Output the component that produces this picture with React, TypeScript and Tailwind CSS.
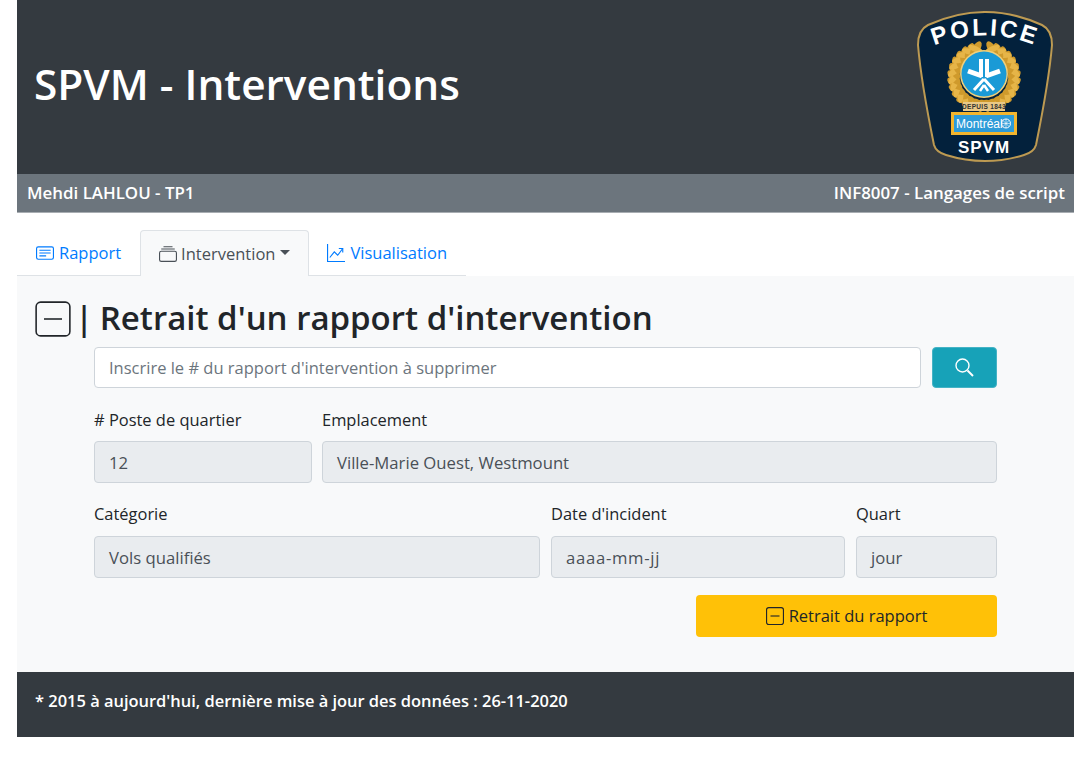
const font = { fontFamily: '"Open Sans", "Noto Sans", sans-serif' };

function CardTextIcon() {
  return (
    <svg width="18" height="18" viewBox="0 0 16 16" fill="none" stroke="currentColor" strokeWidth="1">
      <rect x="0.5" y="2.5" width="15" height="11" rx="1.5" />
      <path d="M3 5.5h10M3 8h10M3 10.5h6" />
    </svg>
  );
}

function CollectionIcon() {
  return (
    <svg width="18" height="18" viewBox="0 0 16 16" fill="none" stroke="currentColor" strokeWidth="1">
      <rect x="0.5" y="5.5" width="15" height="9" rx="1.5" />
      <path d="M2 3.5h12M4 1.5h8" />
    </svg>
  );
}

function GraphIcon() {
  return (
    <svg width="18" height="18" viewBox="0 0 16 16" fill="none" stroke="currentColor" strokeWidth="1">
      <path d="M0.5 0v15.5H16" />
      <path d="M2.5 12l4-5 3 3 4.5-6" />
      <path d="M10.5 4h3.5v3.5" />
    </svg>
  );
}

function DashSquareIcon({ size, width = 1 }: { size: number; width?: number }) {
  return (
    <svg width={size} height={size} viewBox="0 0 16 16" fill="none" stroke="currentColor" strokeWidth={width}>
      <rect x="0.5" y="0.5" width="15" height="15" rx="2" />
      <path d="M4 8h8" />
    </svg>
  );
}

function SearchIcon() {
  return (
    <svg width="19" height="19" viewBox="0 0 19 19" fill="none" stroke="currentColor">
      <circle cx="7.5" cy="7.5" r="6.5" strokeWidth="1.4" />
      <path d="M12.5 12.5l5.5 5.5" strokeWidth="2" />
    </svg>
  );
}

// laurel leaves around the emblem, from the bottom up each side
const leaves = Array.from({ length: 13 }, (_, i) => 14 + i * 12.5);

function PoliceBadge() {
  return (
    <svg width="138" height="152" viewBox="0 0 138 152">
      <path
        d="M12 14 Q69 -12 126 14 Q136 19 136 34 Q133 70 120 134 Q118 141 108 144 Q69 156 30 144 Q20 141 18 134 Q5 70 2 34 Q2 19 12 14 Z"
        fill="#03213c"
        stroke="#bd9a52"
        strokeWidth="2"
      />
      <path id="policeArc" d="M6 40 Q69 9 132 40" fill="none" />
      <text fontFamily="Liberation Sans, sans-serif" fontWeight="700" fontSize="24" letterSpacing="2.5" fill="#ffffff">
        <textPath href="#policeArc" startOffset="50%" textAnchor="middle">POLICE</textPath>
      </text>
      {leaves.map((a) =>
        [-1, 1].map((side) => {
          const rad = (a * Math.PI) / 180;
          const x = 68 + side * 30 * Math.sin(rad);
          const y = 66 + 29 * Math.cos(rad);
          return (
            <g key={`${a}${side}`}>
              <ellipse cx={x} cy={y} rx="9" ry="4" fill="#cf9a2c" transform={`rotate(${-side * a + 40 * side} ${x} ${y})`} />
              <ellipse cx={x} cy={y} rx="8" ry="3" fill="#e6b548" transform={`rotate(${-side * a - 40 * side} ${x} ${y})`} />
            </g>
          );
        })
      )}
      <circle cx="68" cy="63" r="24" fill="#f0cf7a" />
      <circle cx="68" cy="63" r="22.5" fill="#1a9ad6" />
      <g stroke="#ffffff" fill="none" strokeLinecap="butt">
        <path d="M65 48v18M71 48v18" strokeWidth="4" />
        <path d="M52 60l14 5M84 60l-14 5" strokeWidth="5" />
        <path d="M68 68l-10 11M68 68l10 11" strokeWidth="3" />
        <path d="M68 74l-4 6M68 74l4 6" strokeWidth="2.5" />
      </g>
      <rect x="47" y="91" width="42" height="9" fill="#e9c987" />
      <text x="68" y="98" textAnchor="middle" fontFamily="Liberation Sans, sans-serif" fontWeight="700" fontSize="6.5" letterSpacing="0.3" fill="#333333">DEPUIS 1843</text>
      <rect x="36.5" y="102.5" width="63" height="20" fill="#2d9bd8" stroke="#f3b52e" strokeWidth="3" />
      <text x="40" y="117" fontFamily="Liberation Sans, sans-serif" fontSize="12" fill="#ffffff">Montréal</text>
      <circle cx="90" cy="112.5" r="4.5" fill="none" stroke="#ffffff" strokeWidth="1" />
      <path d="M90 108v9M86 112.5h8M87 109.5l6 6M93 109.5l-6 6" stroke="#ffffff" strokeWidth="0.6" />
      <text x="68" y="142" textAnchor="middle" fontFamily="Liberation Sans, sans-serif" fontWeight="700" fontSize="17" letterSpacing="1" fill="#ffffff">SPVM</text>
    </svg>
  );
}

function Field({
  label,
  value,
  className,
  inputGap,
  valueClass = '',
}: {
  label: string;
  value: string;
  className: string;
  inputGap: string;
  valueClass?: string;
}) {
  return (
    <div className={className}>
      <div className="h-[24px] text-[16.45px] leading-[24px] text-[#212529]">{label}</div>
      <div
        className={`${inputGap} flex h-[42px] items-center rounded-[4px] border border-[#ced4da] bg-[#e9ecef] px-[14px] pt-[2px] text-[16.7px] text-[#495057] ${valueClass}`}
      >
        {value}
      </div>
    </div>
  );
}

export default function App() {
  return (
    <div className="min-h-[770px] bg-white pl-[17px]" style={font}>
      <div className="w-[1057px]">
        <header className="flex h-[174px] items-center justify-between bg-[#343a40] pl-[17px] pr-[20px] text-white">
          <h1 className="pb-[6px] text-[42.4px] font-semibold">SPVM - Interventions</h1>
          <PoliceBadge />
        </header>
        <div className="flex h-[39px] items-center justify-between border-b border-[#a8adb2] bg-[#6c757d] pl-[10px] pr-[9px] text-[16.9px] font-semibold text-white">
          <span>Mehdi LAHLOU - TP1</span>
          <span>INF8007 - Langages de script</span>
        </div>

        <nav className="mt-[17px] flex h-[46px] items-end text-[16.5px] leading-[24px]">
          <a className="flex h-[45px] items-center gap-[5px] border-b border-[#dee2e6] pl-[19px] pr-[19px] text-[#007bff]">
            <CardTextIcon />
            Rapport
          </a>
          <a className="flex h-[46px] items-center gap-[4px] rounded-t-[4px] border border-b-0 border-[#dee2e6] bg-[#f8f9fa] pl-[18px] pr-[18px] text-[#495057]">
            <CollectionIcon />
            Intervention
            <span className="mb-[3px] ml-[1px] h-0 w-0 border-x-[5.5px] border-t-[5.5px] border-x-transparent border-t-[#495057]" />
          </a>
          <a className="flex h-[45px] items-center gap-[5px] border-b border-[#dee2e6] pl-[18px] pr-[19px] text-[#007bff]">
            <GraphIcon />
            Visualisation
          </a>
        </nav>

        <main className="h-[396px] bg-[#f8f9fa] px-[18px] pt-[24px]">
          <div className="flex h-[38px] items-center gap-[4px] text-[#212529]">
            <DashSquareIcon size={36} width={0.7} />
            <h2 className="pb-[2px] text-[33px] font-semibold leading-[38px]">
              <span className="mr-[-2px]">|</span> Retrait d'un rapport d'intervention
            </h2>
          </div>
          <div className="ml-[59px] mt-[9px] w-[903px]">
            <div className="flex gap-[11px]">
              <div className="flex h-[41px] flex-1 items-center rounded-[4px] border border-[#ced4da] bg-white px-[14px] pt-[2px] text-[16.5px] text-[#6c757d]">
                Inscrire le # du rapport d'intervention à supprimer
              </div>
              <button className="flex h-[41px] w-[65px] items-center justify-center rounded-[4px] border border-[#45b3c5] bg-[#17a2b8] text-white">
                <SearchIcon />
              </button>
            </div>
            <div className="mt-[20px] flex gap-[10px]">
              <Field label="# Poste de quartier" value="12" className="w-[218px]" inputGap="mt-[9px]" />
              <Field label="Emplacement" value="Ville-Marie Ouest, Westmount" className="flex-1" inputGap="mt-[9px]" />
            </div>
            <div className="mt-[19px] flex gap-[11px]">
              <Field label="Catégorie" value="Vols qualifiés" className="w-[446px]" inputGap="mt-[10px]" />
              <Field label="Date d'incident" value="aaaa-mm-jj" className="w-[294px]" inputGap="mt-[10px]" valueClass="tracking-[0.7px]" />
              <Field label="Quart" value="jour" className="flex-1" inputGap="mt-[10px]" />
            </div>
            <div className="mt-[17px] flex justify-end">
              <button className="flex h-[42px] w-[301px] items-center justify-center gap-[5px] rounded-[4px] bg-[#ffc107] text-[16.5px] text-[#212529]">
                <DashSquareIcon size={18} />
                Retrait du rapport
              </button>
            </div>
          </div>
        </main>

        <footer className="flex h-[65px] items-center bg-[#343a40] px-[18px] pb-[6px] text-[16.46px] font-semibold text-white">
          * 2015 à aujourd'hui, dernière mise à jour des données : 26-11-2020
        </footer>
      </div>
    </div>
  );
}
